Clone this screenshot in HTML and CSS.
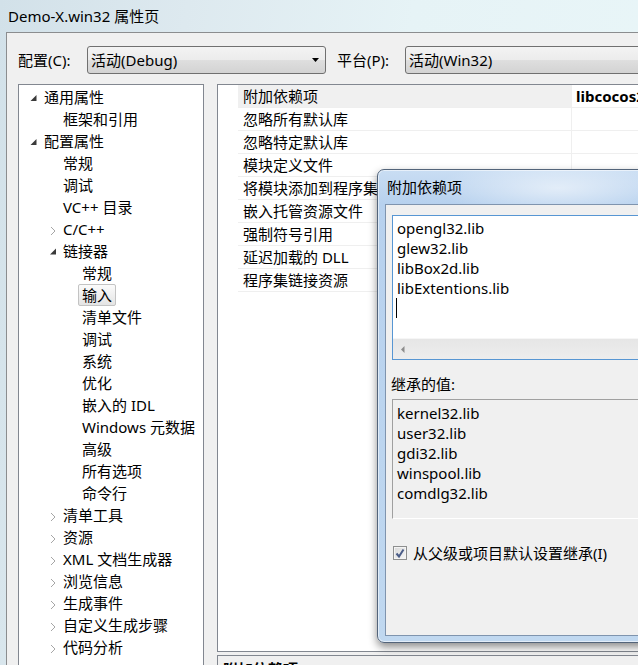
FILE: index.html
```html
<!DOCTYPE html>
<html lang="zh-CN">
<head>
<meta charset="utf-8">
<title>Demo-X.win32 属性页</title>
<link rel="stylesheet" href="styles.css">
</head>
<body>
<div class="titlebar">Demo-X.win32 属性页</div>
<div class="client">
  <div class="config-row">
    <span class="lbl lbl-config">配置(C):</span>
    <div class="combo combo-config"><span>活动(Debug)</span><svg class="combo-arrow" width="7" height="4" viewBox="0 0 7 4"><path d="M0 0H7L3.5 4Z" fill="#000"/></svg></div>
    <span class="lbl lbl-platform">平台(P):</span>
    <div class="combo combo-platform"><span>活动(Win32)</span></div>
  </div>
  <div class="main">
    <div class="tree">
      <div class="ti l0"><svg class="tw" viewBox="0 0 14 22"><path d="M6.5 9V15H0.5Z" fill="#3a3a3a"/></svg>通用属性</div>
      <div class="ti l1">框架和引用</div>
      <div class="ti l0"><svg class="tw" viewBox="0 0 14 22"><path d="M6.5 9V15H0.5Z" fill="#3a3a3a"/></svg>配置属性</div>
      <div class="ti l1">常规</div>
      <div class="ti l1">调试</div>
      <div class="ti l1">VC++ 目录</div>
      <div class="ti l1a"><svg class="tw" viewBox="0 0 14 22"><path d="M2 9L6 13L2 17" fill="none" stroke="#a6a6a6" stroke-width="1"/></svg>C/C++</div>
      <div class="ti l1a"><svg class="tw" viewBox="0 0 14 22"><path d="M7 8.5V14.5H1Z" fill="#3a3a3a"/></svg>链接器</div>
      <div class="ti l2">常规</div>
      <div class="ti l2"><span class="sel">输入</span></div>
      <div class="ti l2">清单文件</div>
      <div class="ti l2">调试</div>
      <div class="ti l2">系统</div>
      <div class="ti l2">优化</div>
      <div class="ti l2">嵌入的 IDL</div>
      <div class="ti l2">Windows 元数据</div>
      <div class="ti l2">高级</div>
      <div class="ti l2">所有选项</div>
      <div class="ti l2">命令行</div>
      <div class="ti l1a"><svg class="tw" viewBox="0 0 14 22"><path d="M2 9L6 13L2 17" fill="none" stroke="#a6a6a6" stroke-width="1"/></svg>清单工具</div>
      <div class="ti l1a"><svg class="tw" viewBox="0 0 14 22"><path d="M2 9L6 13L2 17" fill="none" stroke="#a6a6a6" stroke-width="1"/></svg>资源</div>
      <div class="ti l1a"><svg class="tw" viewBox="0 0 14 22"><path d="M2 9L6 13L2 17" fill="none" stroke="#a6a6a6" stroke-width="1"/></svg>XML 文档生成器</div>
      <div class="ti l1a"><svg class="tw" viewBox="0 0 14 22"><path d="M2 9L6 13L2 17" fill="none" stroke="#a6a6a6" stroke-width="1"/></svg>浏览信息</div>
      <div class="ti l1a"><svg class="tw" viewBox="0 0 14 22"><path d="M2 9L6 13L2 17" fill="none" stroke="#a6a6a6" stroke-width="1"/></svg>生成事件</div>
      <div class="ti l1a"><svg class="tw" viewBox="0 0 14 22"><path d="M2 9L6 13L2 17" fill="none" stroke="#a6a6a6" stroke-width="1"/></svg>自定义生成步骤</div>
      <div class="ti l1a"><svg class="tw" viewBox="0 0 14 22"><path d="M2 9L6 13L2 17" fill="none" stroke="#a6a6a6" stroke-width="1"/></svg>代码分析</div>
    </div>
    <div class="right">
      <div class="grid">
        <div class="row active"><span class="gut"></span><span class="name">附加依赖项</span><span class="val">libcocos2d.lib;%(AdditionalDependencies)</span></div>
        <div class="row"><span class="gut"></span><span class="name">忽略所有默认库</span><span class="val"></span></div>
        <div class="row"><span class="gut"></span><span class="name">忽略特定默认库</span><span class="val"></span></div>
        <div class="row"><span class="gut"></span><span class="name">模块定义文件</span><span class="val"></span></div>
        <div class="row"><span class="gut"></span><span class="name">将模块添加到程序集</span><span class="val"></span></div>
        <div class="row"><span class="gut"></span><span class="name">嵌入托管资源文件</span><span class="val"></span></div>
        <div class="row"><span class="gut"></span><span class="name">强制符号引用</span><span class="val"></span></div>
        <div class="row"><span class="gut"></span><span class="name">延迟加载的 DLL</span><span class="val"></span></div>
        <div class="row"><span class="gut"></span><span class="name">程序集链接资源</span><span class="val"></span></div>
      </div>
      <div class="desc">附加依赖项</div>
    </div>
  </div>
</div>

<div class="dialog">
  <div class="dlg-title">附加依赖项</div>
  <div class="dlg-client">
    <div class="edit">
      <div class="edit-text">
        <div>opengl32.lib</div>
        <div>glew32.lib</div>
        <div>libBox2d.lib</div>
        <div>libExtentions.lib</div>
        <div class="caret"></div>
      </div>
      <div class="hscroll"><svg width="5" height="7" viewBox="0 0 5 7"><path d="M4.5 0V7L1 3.5Z" fill="#8c8c8c"/></svg></div>
    </div>
    <div class="inh-label">继承的值:</div>
    <div class="inh-box">
      <div>kernel32.lib</div>
      <div>user32.lib</div>
      <div>gdi32.lib</div>
      <div>winspool.lib</div>
      <div>comdlg32.lib</div>
    </div>
    <div class="check">
      <span class="cbox"><svg width="12" height="12" viewBox="0 0 12 12"><path d="M2.5 6.5L5 9.5L9.5 2.5" fill="none" stroke="#4b5d88" stroke-width="2"/></svg></span>
      <span>从父级或项目默认设置继承(I)</span>
    </div>
  </div>
</div>
</body>
</html>
```

FILE: styles.css
```css
* { box-sizing: border-box; }
html, body { margin: 0; padding: 0; }
body {
  width: 638px;
  height: 665px;
  overflow: hidden;
  position: relative;
  font-family: "Noto Sans", "Noto Sans CJK SC", sans-serif;
  font-size: 15px;
  color: #000;
  background: linear-gradient(100deg, #d2e1e9 0%, #dde9ef 25%, #e6f3f6 55%, #e9f6f8 100%);
}
.titlebar {
  height: 32px;
  line-height: 32px;
  padding-left: 8px;
  white-space: nowrap;
}
.client {
  margin-left: 6px;
  height: 633px;
  border-left: 1px solid #8b8d8f;
  border-top: 1px solid #8b8d8f;
  background: #f0f0f0;
}
.config-row {
  display: flex;
  align-items: center;
  height: 28px;
  margin-top: 13px;
  padding-left: 11px;
  white-space: nowrap;
}
.lbl { line-height: 20px; flex: none; }
.lbl-config { width: 69px; }
.lbl-platform { width: 68px; margin-left: 11px; }
.combo {
  flex: none;
  height: 28px;
  border: 1px solid #707070;
  border-radius: 3px;
  background: linear-gradient(#f3f3f3 0%, #ececec 48%, #dedede 52%, #d3d3d3 100%);
  display: flex;
  align-items: center;
  padding-left: 3px;
  line-height: 20px;
}
.combo-config { width: 239px; justify-content: space-between; padding-right: 6px; }
.combo-platform { width: 260px; }
.combo-arrow { flex: none; }

.main {
  display: flex;
  margin-top: 10px;
  padding-left: 11px;
}
.tree {
  flex: none;
  width: 186px;
  height: 600px;
  border: 1px solid #828790;
  background: #fff;
  padding-top: 1px;
}
.ti {
  height: 22px;
  line-height: 22px;
  display: flex;
  align-items: center;
  white-space: nowrap;
}
.l0 { padding-left: 11px; }
.l1a { padding-left: 30px; }
.l1 { padding-left: 44px; }
.l2 { padding-left: 63px; }
.tw { width: 14px; height: 22px; flex: none; }
.sel {
  margin-left: -4px;
  padding: 0 3px;
  height: 22px;
  line-height: 20px;
  border: 1px solid #c3c3c3;
  border-radius: 2px;
  background: linear-gradient(#fbfbfb, #e4e4e4);
}

.right {
  margin-left: 13px;
  width: 440px;
  flex: none;
  display: flex;
  flex-direction: column;
}
.grid {
  height: 568px;
  border: 1px solid #828790;
  border-right: none;
  background: #fff;
}
.row {
  display: flex;
  height: 23px;
  white-space: nowrap;
}
.gut { width: 20px; flex: none; }
.name {
  width: 334px;
  flex: none;
  border-bottom: 1px solid #efefef;
  border-right: 1px solid #efefef;
  padding-left: 5px;
  line-height: 22px;
  overflow: hidden;
}
.val {
  flex: 1;
  border-bottom: 1px solid #efefef;
  padding-left: 4px;
  line-height: 22px;
  font-weight: bold;
  overflow: hidden;
}
.row.active .name { background: #f0f0f0; }
.desc {
  margin-top: 3px;
  height: 40px;
  border: 1px solid #828790;
  border-right: none;
  background: #f0f0f0;
  padding: 3px 0 0 5px;
  line-height: 20px;
  font-weight: bold;
}

.dialog {
  position: absolute;
  left: 377px;
  top: 169px;
  width: 300px;
  height: 474px;
  border: 1px solid #53647a;
  border-radius: 7px;
  padding: 0 0 6px 7px;
  display: flex;
  flex-direction: column;
  background:
    radial-gradient(ellipse 120px 30px at 180px 18px, rgba(255,255,255,0.55), rgba(255,255,255,0) 100%),
    linear-gradient(180deg, #c9ddf3 0%, #b7d1ee 34px, #c0d8f0 100%);
  box-shadow: 0 4px 9px rgba(0,0,0,0.45), inset 0 0 0 1px rgba(255,255,255,0.55);
}
.dlg-title {
  flex: none;
  height: 34px;
  line-height: 34px;
  padding-left: 2px;
  white-space: nowrap;
}
.dlg-client {
  flex: 1;
  border: 1px solid #7f94ae;
  background: #f0f0f0;
  padding: 10px 0 0 0;
}
.edit {
  margin-left: 6px;
  width: 260px;
  height: 145px;
  border: 1px solid #5796d3;
  background: #fff;
  display: flex;
  flex-direction: column;
}
.edit-text {
  flex: 1;
  padding: 2px 0 0 4px;
  line-height: 20px;
  white-space: nowrap;
}
.caret {
  width: 1px;
  height: 20px;
  margin-left: -1px;
  background: #000;
}
.hscroll {
  flex: none;
  height: 21px;
  background: linear-gradient(#e6e6e6, #ededed);
  border-top: 1px solid #f6f6f6;
  display: flex;
  align-items: center;
  padding-left: 7px;
}
.inh-label {
  margin: 14px 0 0 5px;
  line-height: 20px;
}
.inh-box {
  margin: 5px 0 0 6px;
  width: 260px;
  height: 120px;
  border-top: 1px solid #a0a0a0;
  border-left: 1px solid #a0a0a0;
  border-bottom: 1px solid #fff;
  border-right: 1px solid #fff;
  padding: 3px 0 0 4px;
  line-height: 20px;
}
.check {
  margin: 24px 0 0 7px;
  height: 20px;
  display: flex;
  align-items: center;
  white-space: nowrap;
  line-height: 20px;
}
.cbox {
  flex: none;
  width: 14px;
  height: 14px;
  margin-right: 6px;
  border: 1px solid #8e8f8f;
  background: linear-gradient(135deg, #d9d9d9, #f7f7f7);
  box-shadow: inset 0 0 0 1px #f4f4f4;
  display: flex;
  align-items: center;
  justify-content: center;
}
```
